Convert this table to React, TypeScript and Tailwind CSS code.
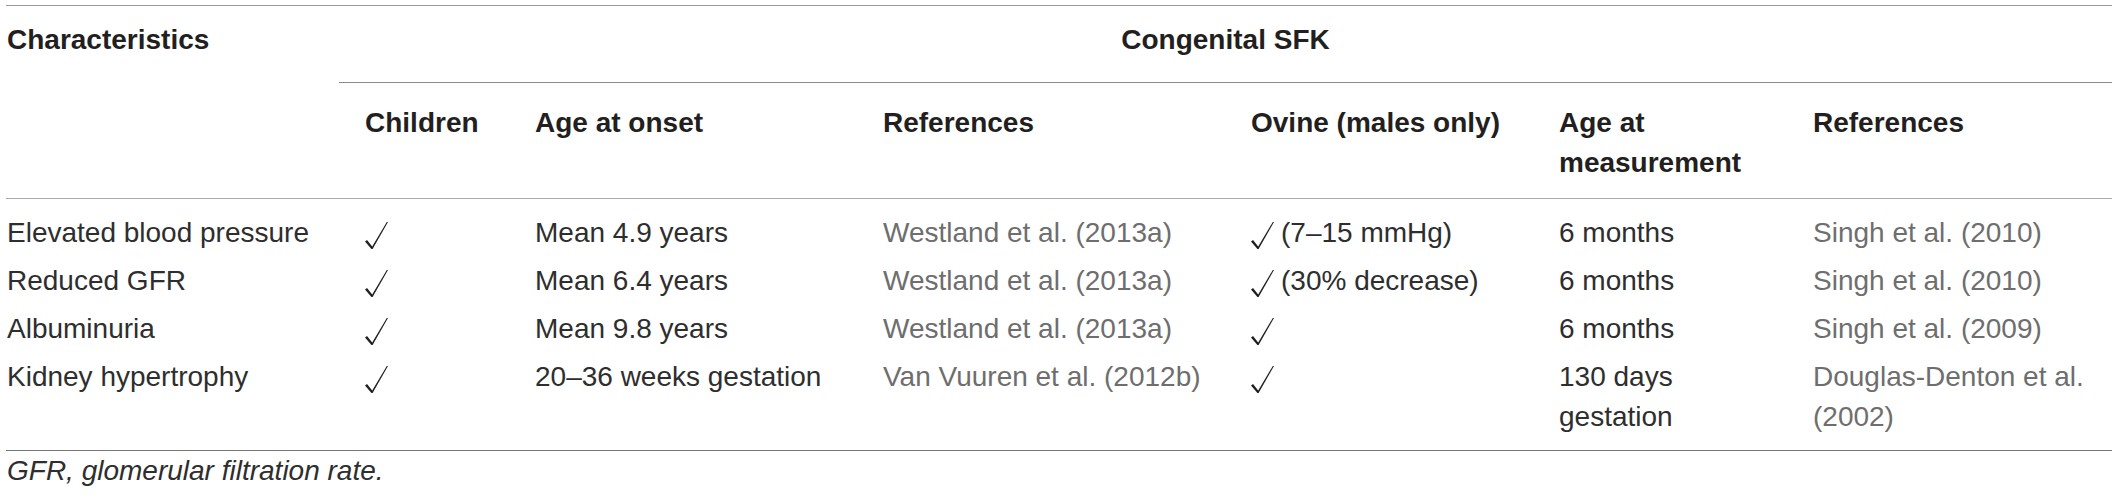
import React from 'react';

const cols = 'grid grid-cols-[333px_170px_348px_368px_308px_254px_325px]';

const rows = [
  {
    name: 'Elevated blood pressure',
    onset: 'Mean 4.9 years',
    ref1: 'Westland et al. (2013a)',
    ovine: '(7–15 mmHg)',
    age: '6 months',
    ref2: 'Singh et al. (2010)',
  },
  {
    name: 'Reduced GFR',
    onset: 'Mean 6.4 years',
    ref1: 'Westland et al. (2013a)',
    ovine: '(30% decrease)',
    age: '6 months',
    ref2: 'Singh et al. (2010)',
  },
  {
    name: 'Albuminuria',
    onset: 'Mean 9.8 years',
    ref1: 'Westland et al. (2013a)',
    ovine: '',
    age: '6 months',
    ref2: 'Singh et al. (2009)',
  },
  {
    name: 'Kidney hypertrophy',
    onset: '20–36 weeks gestation',
    ref1: 'Van Vuuren et al. (2012b)',
    ovine: '',
    age: '130 days gestation',
    ref2: 'Douglas-Denton et al. (2002)',
  },
];

function Check() {
  return (
    <svg width="23" height="27" viewBox="0 0 23 27" className="mt-[9px] shrink-0" fill="#231f20">
      <path d="M0 19.5 L2 18 L7.2 24.5 L21.8 0 L23 0 L7.6 27 L6.4 27 Z" />
    </svg>
  );
}

export default function App() {
  return (
    <div className="w-[2118px] h-[499px] bg-white font-['Liberation_Sans',Arial,sans-serif] text-[28px] leading-[40px] text-[#2e2e2e]">
      <div className="ml-[6px] w-[2106px] pt-[5px]">
        <div className="border-t border-[#9a9a9a]">
          {/* header row 1 */}
          <div className={`${cols} font-bold text-[#231f20]`}>
            <div className="pl-px pt-[14px] pb-[23px]">Characteristics</div>
            <div className="col-span-6 pt-[14px] pb-[22px] text-center border-b border-[#8c8c8c]">
              Congenital SFK
            </div>
          </div>

          {/* header row 2 */}
          <div className={`${cols} font-bold text-[#231f20] pt-[20px] pb-[15px] border-b border-[#aaaaaa]`}>
            <div className="pl-px pr-[10px]"></div>
            <div className="pl-[26px] pr-[10px]">Children</div>
            <div className="pl-[26px] pr-[10px]">Age at onset</div>
            <div className="pl-[26px] pr-[10px]">References</div>
            <div className="pl-[26px] pr-[10px]">Ovine (males only)</div>
            <div className="pl-[26px] pr-[10px]">Age at measurement</div>
            <div className="pl-[26px] pr-[10px]">References</div>
          </div>

          {/* body */}
          <div className="pt-[10px] pb-[9px] border-b border-[#777777]">
            {rows.map((r) => (
              <div key={r.name} className={`${cols} py-[4px]`}>
                <div className="pl-px pr-[10px]">{r.name}</div>
                <div className="pl-[26px] pr-[10px] flex items-start">
                  <Check />
                </div>
                <div className="pl-[26px] pr-[10px]">{r.onset}</div>
                <div className="pl-[26px] pr-[10px] text-[#6e6e6e]">{r.ref1}</div>
                <div className="pl-[26px] pr-[10px] flex items-start gap-[7px]">
                  <Check />
                  {r.ovine && <span>{r.ovine}</span>}
                </div>
                <div className="pl-[26px] pr-[10px]">{r.age}</div>
                <div className="pl-[26px] pr-[10px] text-[#6e6e6e]">{r.ref2}</div>
              </div>
            ))}
          </div>

          <p className="pl-px italic text-[#2e2e2e]">GFR, glomerular filtration rate.</p>
        </div>
      </div>
    </div>
  );
}
